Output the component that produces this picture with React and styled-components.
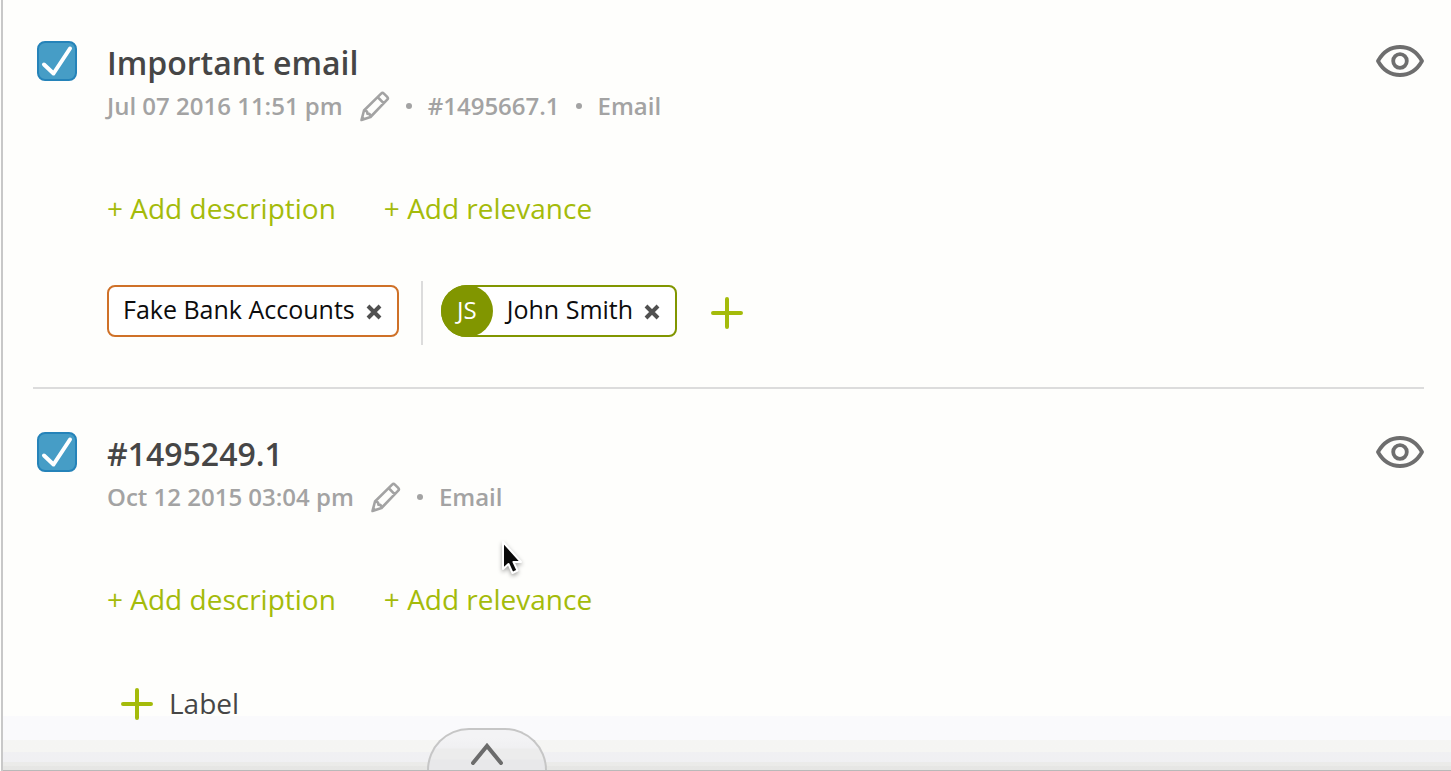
import React, { useState } from "react";
import styled, { createGlobalStyle } from "styled-components";

const GlobalStyle = createGlobalStyle`
  *, *::before, *::after { box-sizing: border-box; }
  body {
    margin: 0;
    background: #fefefc;
    color: #464646;
    font-family: "Open Sans", "Noto Sans", sans-serif;
  }
  button {
    display: inline-flex;
    align-items: center;
    margin: 0;
    padding: 0;
    border: 0;
    background: none;
    color: inherit;
    font: inherit;
    cursor: pointer;
  }
  svg { display: block; }
`;

const Panel = styled.main`
  position: relative;
  height: 100vh;
  margin-left: 1px;
  padding: 0 27px 0 30px;
  border-left: 2px solid #c8c8c8;
  overflow: hidden;
`;

const Item = styled.article`
  display: flex;
  align-items: flex-start;
  padding: 41px 0 42px 4px;

  & + & {
    padding-top: 43px;
    border-top: 2px solid #dcdcdc;
  }
`;

const CheckWrap = styled.label`
  display: grid;
  flex: none;
  width: 40px;
  height: 40px;
  margin-right: 30px;

  & > * { grid-area: 1 / 1; }
  svg { pointer-events: none; visibility: hidden; }
  input:checked + svg { visibility: visible; }
`;

const Checkbox = styled.input`
  appearance: none;
  width: 40px;
  height: 40px;
  margin: 0;
  border: 2px solid #aaaaaa;
  border-radius: 8px;
  background: #ffffff;

  &:checked {
    border-color: #2583b9;
    background: #469dc6;
  }
`;

const Body = styled.div`
  flex: 1;
  min-width: 0;
`;

const Title = styled.h2`
  margin: 0;
  font-size: 32px;
  line-height: 44px;
  font-weight: 600;
`;

const Meta = styled.div`
  display: flex;
  align-items: center;
  font-size: 24px;
  line-height: 42px;
  font-weight: 600;
  color: #a3a3a3;
`;

const EditButton = styled.button`
  margin-left: 16px;
`;

const Dot = styled.span`
  width: 6px;
  height: 6px;
  margin: 0 16px;
  border-radius: 50%;
  background: currentColor;
`;

const Actions = styled.div`
  display: flex;
  gap: 48px;
  margin-top: 61px;
  font-size: 28px;
  line-height: 40px;
  color: #a4bb0a;
`;

const Tags = styled.div`
  display: flex;
  align-items: center;
  height: 64px;
  margin-top: 53px;
`;

const Tag = styled.span`
  display: flex;
  align-items: center;
  height: 52px;
  margin-bottom: 4px;
  padding: 0 15px 4px 14px;
  border: 2px solid ${(p) => p.$color};
  border-radius: 8px;
  background: #ffffff;
  font-size: 25px;
  line-height: 36px;
  color: #0c0c0c;
`;

const PersonTag = styled(Tag)`
  padding-left: 64px;
  border-top-left-radius: 26px;
  border-bottom-left-radius: 26px;
`;

const Person = styled.span`
  position: relative;
`;

const Avatar = styled.span`
  position: absolute;
  left: 0;
  top: 0;
  width: 52px;
  height: 52px;
  border-radius: 50%;
  background: #819600;
  color: #ffffff;
  font-size: 24px;
  line-height: 50px;
  text-align: center;
`;

const RemoveButton = styled.button`
  margin: 5px 0 0 11px;
`;

const Separator = styled.span`
  width: 2px;
  height: 64px;
  margin: 0 18px 0 22px;
  background: #dcdcdc;
`;

const AddButton = styled.button`
  gap: 16px;
  margin-left: ${(p) => (p.$labelled ? 14 : 34)}px;
  font-size: 28px;
  line-height: 40px;
`;

const AddText = styled.span`
  padding-bottom: 2px;
`;

const Footer = styled.footer`
  position: absolute;
  left: 0;
  right: 0;
  bottom: 0;
  display: flex;
  align-items: flex-end;
  height: 55px;
  padding-left: 424px;
  border-bottom: 1px solid #b9b9b9;
  background: linear-gradient(
    to bottom,
    rgba(0, 0, 255, 0.016) 0 24px,
    rgba(0, 0, 0, 0.035) 24px 36px,
    rgba(0, 0, 80, 0.055) 36px 46px,
    rgba(0, 0, 0, 0.075) 46px 50px,
    rgba(0, 0, 0, 0.095) 50px
  );
`;

const Handle = styled.button`
  justify-content: center;
  width: 120px;
  height: 42px;
  padding-top: 8px;
  border: 2px solid #c6c6c6;
  border-bottom: 0;
  border-radius: 42px 42px 0 0;
  background: linear-gradient(#f3f3f5 0 8px, #f0f0f2 18px, #ececec 19px 29px, #e8e8ea 30px);
`;

const Pointer = styled.svg`
  position: absolute;
  left: 492px;
  top: 538px;
  filter: drop-shadow(0 2px 2px rgba(0, 0, 0, 0.35));
`;

const TickIcon = () => (
  <svg width="40" height="40" viewBox="0 0 40 40" fill="none" stroke="#fff" strokeWidth="4" strokeLinecap="round" strokeLinejoin="round" aria-hidden="true">
    <path d="M7 23.5 16.5 32.5 33 7.5" />
  </svg>
);

const PencilIcon = () => (
  <svg width="31" height="32" viewBox="0 0 31 32" fill="none" stroke="currentColor" strokeWidth="2.6" strokeLinejoin="round" aria-hidden="true">
    <path d="M2.5 30 5 20.5 22.1 3.6Q23.5 2.3 24.9 3.6L28.2 6.9Q29.6 8.3 28.2 9.7L11.5 27 2.5 30ZM5 20.5Q8.5 20.3 8.4 23.6Q11.8 23.7 11.5 27M18.6 7 24.8 13.3" />
    <path d="M3.5 26 6.5 28.7 2.5 30Z" fill="currentColor" stroke="none" />
  </svg>
);

const EyeIcon = () => (
  <svg width="48" height="32" viewBox="0 0 48 32" fill="none" stroke="#6e6e6e" strokeWidth="3.8" strokeLinejoin="round" aria-hidden="true">
    <path d="M2 16C7 7 15 2 24 2S41 7 46 16C41 25 33 30 24 30S7 25 2 16Z" />
    <circle cx="24" cy="16" r="6.8" />
  </svg>
);

const EyeButton = styled.button`
  flex: none;
  margin-top: 4px;
`;

const RemoveIcon = () => (
  <svg width="16" height="16" viewBox="0 0 16 16" fill="none" stroke="#505050" strokeWidth="4" aria-hidden="true">
    <path d="M2 2 14 14M14 2 2 14" />
  </svg>
);

const PlusIcon = () => (
  <svg width="32" height="32" viewBox="0 0 32 32" fill="none" stroke="#a4bb0a" strokeWidth="4" strokeLinecap="round" aria-hidden="true">
    <path d="M16 2V30M2 16H30" />
  </svg>
);

const ChevronIcon = () => (
  <svg width="34" height="24" viewBox="0 0 34 24" fill="none" stroke="#6c6c6c" strokeWidth="4" strokeLinecap="round" strokeLinejoin="miter" aria-hidden="true">
    <path d="M3 21 17 4 31 21" />
  </svg>
);

function Evidence({ title, date, details, children }) {
  const [checked, setChecked] = useState(true);
  return (
    <Item>
      <CheckWrap>
        <Checkbox
          type="checkbox"
          aria-label={`Select ${title}`}
          checked={checked}
          onChange={(e) => setChecked(e.target.checked)}
        />
        <TickIcon />
      </CheckWrap>
      <Body>
        <Title>{title}</Title>
        <Meta>
          <span>{date}</span>
          <EditButton aria-label="Edit date"><PencilIcon /></EditButton>
          {details.map((text) => (
            <React.Fragment key={text}>
              <Dot />
              <span>{text}</span>
            </React.Fragment>
          ))}
        </Meta>
        <Actions>
          <button>+ Add description</button>
          <button>+ Add relevance</button>
        </Actions>
        <Tags>{children}</Tags>
      </Body>
      <EyeButton aria-label={`View ${title}`}><EyeIcon /></EyeButton>
    </Item>
  );
}

export default function App() {
  return (
    <>
      <GlobalStyle />
      <Panel>
        <Evidence title="Important email" date="Jul 07 2016 11:51 pm" details={["#1495667.1", "Email"]}>
          <Tag $color="#cf7128">
            Fake Bank Accounts
            <RemoveButton aria-label="Remove Fake Bank Accounts"><RemoveIcon /></RemoveButton>
          </Tag>
          <Separator />
          <Person>
            <PersonTag $color="#819600">
              John Smith
              <RemoveButton aria-label="Remove John Smith"><RemoveIcon /></RemoveButton>
            </PersonTag>
            <Avatar>JS</Avatar>
          </Person>
          <AddButton aria-label="Add label"><PlusIcon /></AddButton>
        </Evidence>
        <Evidence title="#1495249.1" date="Oct 12 2015 03:04 pm" details={["Email"]}>
          <AddButton $labelled>
            <PlusIcon />
            <AddText>Label</AddText>
          </AddButton>
        </Evidence>
        <Footer>
          <Handle aria-label="Expand panel"><ChevronIcon /></Handle>
        </Footer>
        <Pointer width="30" height="40" viewBox="0 0 30 40" aria-hidden="true">
          <path d="M8 4V31L13.5 26 17.5 35 22.5 32.5 18.5 24H26Z" fill="#0a0a0a" stroke="#fff" strokeWidth="2" strokeLinejoin="round" />
        </Pointer>
      </Panel>
    </>
  );
}
